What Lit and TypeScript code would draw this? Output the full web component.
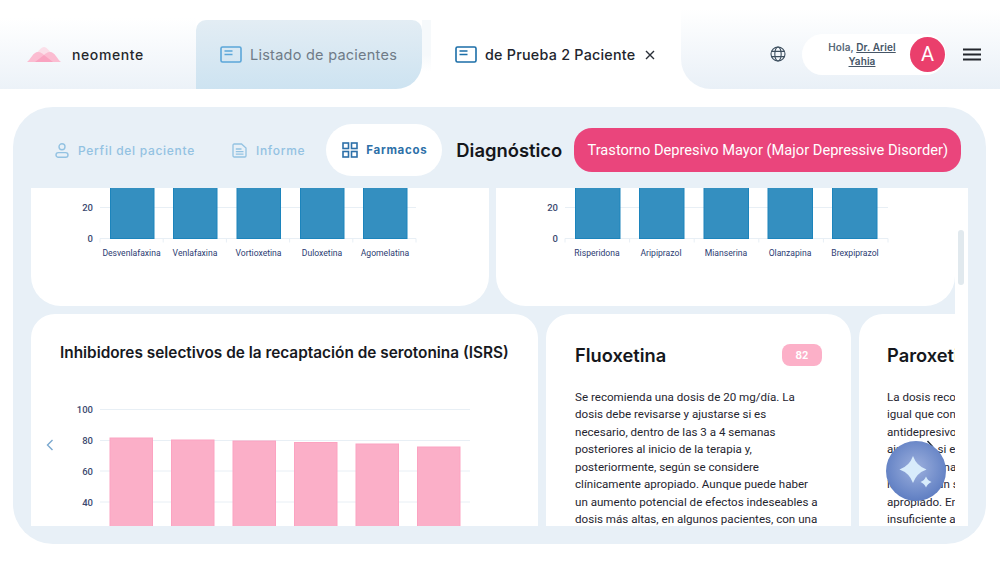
import { LitElement, css, html, svg } from 'lit';
import { customElement } from 'lit/decorators.js';

interface BarChart {
  width: number;
  height: number;
  gridLeft: number;
  gridRight: number;
  baseline: number | null;
  ticks: { label: string; y: number }[];
  barWidth: number;
  bars: { x: number; top: number; label?: string; labelX?: number }[];
  fill: string;
  stroke: string;
}

const blueLeft: BarChart = {
  width: 458,
  height: 118,
  gridLeft: 69,
  gridRight: 385,
  baseline: 50.5,
  ticks: [
    { label: '20', y: 19.5 },
    { label: '0', y: 50.5 },
  ],
  barWidth: 43.5,
  bars: [
    { x: 79.5, top: -5, label: 'Desvenlafaxina', labelX: 100.5 },
    { x: 142.5, top: -5, label: 'Venlafaxina', labelX: 164 },
    { x: 206, top: -5, label: 'Vortioxetina', labelX: 227.5 },
    { x: 269.5, top: -5, label: 'Duloxetina', labelX: 291 },
    { x: 332.5, top: -5, label: 'Agomelatina', labelX: 354 },
  ],
  fill: '#348fc0',
  stroke: '#1c84bc',
};

const blueRight: BarChart = {
  width: 459,
  height: 118,
  gridLeft: 69,
  gridRight: 392,
  baseline: 50.5,
  ticks: [
    { label: '20', y: 19.5 },
    { label: '0', y: 50.5 },
  ],
  barWidth: 44.5,
  bars: [
    { x: 79.5, top: -5, label: 'Risperidona', labelX: 101 },
    { x: 143.5, top: -5, label: 'Aripiprazol', labelX: 165 },
    { x: 208, top: -5, label: 'Mianserina', labelX: 230 },
    { x: 272, top: -5, label: 'Olanzapina', labelX: 294 },
    { x: 336.5, top: -5, label: 'Brexpiprazol', labelX: 359 },
  ],
  fill: '#348fc0',
  stroke: '#1c84bc',
};

const pinkChart: BarChart = {
  width: 507,
  height: 162,
  gridLeft: 69,
  gridRight: 439,
  baseline: null,
  ticks: [
    { label: '100', y: 45.5 },
    { label: '80', y: 76.5 },
    { label: '60', y: 107 },
    { label: '40', y: 138 },
  ],
  barWidth: 42.5,
  bars: [
    { x: 79, top: 74 },
    { x: 140.5, top: 76 },
    { x: 202, top: 77 },
    { x: 263.5, top: 78.5 },
    { x: 325, top: 80 },
    { x: 386.5, top: 83 },
  ],
  fill: '#fbafc8',
  stroke: '#fca3c1',
};

function renderChart(c: BarChart) {
  const slot = (c.gridRight - c.gridLeft) / c.bars.length;
  return html`<svg class="chart" width=${c.width} height=${c.height} viewBox="0 0 ${c.width} ${c.height}">
    ${c.ticks.map(
      t => svg`<line x1=${c.gridLeft} x2=${c.gridRight} y1=${t.y} y2=${t.y} stroke="#e8eff5" stroke-width="1" />
        <text class="tick" x=${c.gridLeft - 7} y=${t.y + 3.5} text-anchor="end">${t.label}</text>`,
    )}
    ${c.baseline !== null
      ? c.bars.map((_, i) => {
          const x = c.gridLeft + slot * i;
          return svg`<line x1=${x} x2=${x} y1=${c.baseline!} y2=${c.baseline! + 4} stroke="#e8eff5" />`;
        })
      : ''}
    ${c.baseline !== null
      ? svg`<line x1=${c.gridRight} x2=${c.gridRight} y1=${c.baseline} y2=${c.baseline + 4} stroke="#e8eff5" />`
      : ''}
    ${c.bars.map(
      b => svg`<rect x=${b.x} y=${b.top} width=${c.barWidth} height=${(c.baseline ?? c.height + 5) - b.top}
          fill=${c.fill} stroke=${c.stroke} stroke-width="1" />
        ${b.label
          ? svg`<text class="cat" x=${b.labelX} y=${(c.baseline ?? 0) + 17} text-anchor="middle">${b.label}</text>`
          : ''}`,
    )}
  </svg>`;
}

const cardIcon = (color: string) => html`<svg width="22" height="17" viewBox="0 0 22 17" fill="none" stroke=${color}>
  <rect x="1" y="1" width="20" height="15" rx="1.5" stroke-width="1.6" />
  <path d="M4.500 5H12.500M4.500 8.500H12.500" stroke-width="1.4" />
</svg>`;

@customElement('app-root')
export class AppRoot extends LitElement {
  static styles = css`
    :host {
      display: block;
      position: relative;
      width: 1000px;
      height: 561px;
      overflow: hidden;
      background: #fff;
      font-family: 'Inter', 'Liberation Sans', sans-serif;
      color: #222;
    }

    .top {
      display: flex;
      height: 89px;
    }
    .brand {
      width: 196px;
      display: flex;
      align-items: center;
      gap: 11px;
      padding: 19px 0 0 27px;
      box-sizing: border-box;
      background: linear-gradient(180deg, #fff 20%, #ecf2f8 100%);
      font-size: 14px;
      font-weight: 500;
      color: #26272b;
      letter-spacing: 0.6px;
    }
    .tab {
      margin-top: 20px;
      display: flex;
      align-items: center;
      gap: 8px;
      box-sizing: border-box;
      font-size: 14.5px;
      white-space: nowrap;
      letter-spacing: 0.25px;
    }
    .tab.idle {
      width: 226px;
      padding-left: 24px;
      border-radius: 10px 10px 26px 0;
      background: linear-gradient(180deg, #e3edf4 0%, #cde3f1 100%);
      color: #6f7b87;
    }
    .tab-gap {
      width: 9px;
      margin-top: 20px;
      background: linear-gradient(180deg, #f6f9fb 0%, #f6f9fb 50%, #fff 75%);
    }
    .tab.open {
      width: 250px;
      padding-left: 24px;
      border-radius: 10px 10px 0 0;
      background: #fff;
      color: #22252d;
      font-weight: 500;
      font-size: 14.3px;
    }
    .close {
      margin-left: 2px;
      display: block;
    }
    .right {
      flex: 1;
      display: flex;
      align-items: center;
      padding: 19px 0 0 89px;
      border-bottom-left-radius: 30px;
      background: linear-gradient(180deg, #fff 10%, #e9f0f7 100%);
    }
    .greet {
      width: 144px;
      height: 41px;
      margin-left: 16px;
      display: flex;
      align-items: center;
      box-sizing: border-box;
      padding-right: 1px;
      border-radius: 21px;
      background: #fff;
    }
    .greet p {
      flex: 1;
      margin: 0;
      padding-left: 12px;
      text-align: center;
      font-size: 10px;
      font-weight: 600;
      letter-spacing: 0.1px;
      line-height: 14.5px;
      color: #586878;
    }
    .greet u {
      color: #455566;
    }
    .avatar {
      width: 35px;
      height: 35px;
      flex: none;
      display: flex;
      align-items: center;
      justify-content: center;
      border-radius: 50%;
      background: #ea3f6c;
      color: #fff;
      font-family: 'Roboto', sans-serif;
      font-size: 20px;
    }
    .menu {
      margin-left: 17px;
      display: block;
    }

    .panel {
      height: 437px;
      margin: 18px 14px 0 13px;
      padding: 17px 18px 18px 18px;
      box-sizing: border-box;
      border-radius: 40px;
      background: #e8f0f7;
    }
    .nav {
      height: 52px;
      display: flex;
      align-items: center;
      margin-bottom: 12px;
      white-space: nowrap;
    }
    .nav-item {
      display: flex;
      align-items: center;
      gap: 9px;
      font-size: 12px;
      font-weight: 500;
      letter-spacing: 0.7px;
      color: #93c2e2;
    }
    .nav-item.profile {
      margin-left: 24px;
    }
    .nav-item.report {
      margin-left: 37px;
    }
    .nav-item.active {
      margin-left: 21px;
      height: 52px;
      width: 116px;
      box-sizing: border-box;
      padding-left: 16px;
      gap: 8px;
      border-radius: 26px;
      background: #fff;
      color: #2d70a8;
      font-weight: 700;
      font-size: 11.5px;
    }
    .dx-label {
      margin-left: 14px;
      font-size: 18.4px;
      font-weight: 600;
      color: #14161b;
    }
    .dx-value {
      margin-left: 12px;
      width: 387px;
      height: 44px;
      flex: none;
      display: flex;
      align-items: center;
      justify-content: center;
      border-radius: 18px;
      background: #ea457c;
      color: #fff;
      font-family: 'Roboto', sans-serif;
      font-size: 14.65px;
    }

    .content {
      display: flex;
      width: 937px;
      height: 338px;
    }
    .cards {
      position: relative;
      width: 924px;
      display: flex;
      flex-direction: column;
      gap: 8px;
      overflow: hidden;
    }
    .scroll-track {
      width: 13px;
      background: #fff;
    }
    .scroll-thumb {
      width: 6px;
      height: 55px;
      margin: 42px 0 0 3px;
      border-radius: 3px;
      background: #e1e9ee;
    }
    .row {
      display: flex;
      flex: none;
    }
    .row.upper {
      height: 118px;
      gap: 7px;
    }
    .row.lower {
      height: 212px;
      gap: 8px;
    }
    .card {
      flex: none;
      background: #fff;
      overflow: hidden;
    }
    .upper .card {
      border-radius: 0 0 30px 30px;
    }
    .lower .card {
      border-radius: 24px 24px 0 0;
    }
    .chart {
      display: block;
    }
    .tick {
      font-family: 'Roboto', sans-serif;
      font-size: 9.5px;
      font-weight: 500;
      fill: #3d4a70;
    }
    .cat {
      font-family: 'Roboto', sans-serif;
      font-size: 8.6px;
      fill: #2c3c72;
    }
    .chart-card {
      width: 507px;
    }
    .chart-card h2 {
      margin: 28px 0 0 29px;
      font-size: 15.36px;
      line-height: 22px;
      font-weight: 600;
      color: #17191e;
      white-space: nowrap;
    }
    .drug {
      width: 305px;
      box-sizing: border-box;
      padding: 30px 29px 0 29px;
    }
    .drug.next {
      padding-left: 28px;
    }
    .drug-head {
      display: flex;
      align-items: center;
      justify-content: space-between;
      height: 22px;
    }
    .drug-head h3 {
      margin: 0;
      font-size: 18.3px;
      font-weight: 600;
      color: #15171c;
    }
    .score {
      width: 40px;
      height: 22px;
      display: flex;
      align-items: center;
      justify-content: center;
      border-radius: 8px;
      background: #fcb0c8;
      color: #fff;
      font-size: 10px;
      font-weight: 700;
    }
    .drug p {
      margin: 23px 0 0;
      font-family: 'Roboto', sans-serif;
      font-size: 11.6px;
      line-height: 17.45px;
      color: #1f2530;
      white-space: nowrap;
    }
    .arrow {
      position: absolute;
      display: block;
    }
    .arrow.prev {
      left: 15px;
      top: 251px;
    }
    .arrow.next {
      left: 895px;
      top: 252px;
    }
    .fab {
      position: absolute;
      left: 886px;
      top: 441px;
      width: 60px;
      height: 60px;
      border-radius: 50%;
      background: radial-gradient(circle at 50% 45%, #9db0dd 0%, #6b88c8 60%, #4a6cb6 100%);
    }
    .fab svg {
      display: block;
    }
  `;

  render() {
    return html`
      <div class="top">
        <div class="brand">
          <svg width="34" height="15" viewBox="0 0 34 15">
            <path d="M8 7C12 4 14 0 17 0S22 4 26 7L17 13Z" fill="#fbdfe9" />
            <path d="M0 15C4 12 6 5 11 5C14 5 16 7 17 8C18 7 20 5 23 5C28 5 30 12 34 15Z" fill="#fbbcd1" />
            <path d="M8 15C11 13 14 10 17 8C20 10 23 13 26 15Z" fill="#f9a3c0" />
          </svg>
          <span>neomente</span>
        </div>
        <div class="tab idle">${cardIcon('#5ba6d9')}<span>Listado de pacientes</span></div>
        <div class="tab-gap"></div>
        <div class="tab open">
          ${cardIcon('#1b6ea8')}<span>de Prueba 2 Paciente</span>
          <svg class="close" width="10" height="10" viewBox="0 0 10 10" stroke="#2a2f38" stroke-width="1.4">
            <path d="M1 1L9 9M9 1L1 9" />
          </svg>
        </div>
        <div class="right">
          <svg width="16" height="16" viewBox="0 0 16 16" fill="none" stroke="#3c4e5e" stroke-width="1.1">
            <circle cx="8" cy="8" r="7" />
            <ellipse cx="8" cy="8" rx="3.2" ry="7" />
            <path d="M1.600 5.400H14.400M1.600 10.600H14.400" />
          </svg>
          <div class="greet">
            <p>Hola, <u>Dr. Ariel<br />Yahia</u></p>
            <div class="avatar">A</div>
          </div>
          <svg class="menu" width="18" height="13" viewBox="0 0 18 13" stroke="#23262c" stroke-width="2">
            <path d="M0 1.500H18M0 6.500H18M0 11.500H18" />
          </svg>
        </div>
      </div>

      <div class="panel">
        <div class="nav">
          <div class="nav-item profile">
            <svg width="14" height="15" viewBox="0 0 14 15" fill="none" stroke="#93c2e2" stroke-width="1.4">
              <circle cx="7" cy="3.800" r="3" />
              <rect x="1" y="9.600" width="12" height="4.600" rx="2.300" />
            </svg>
            <span>Perfil del paciente</span>
          </div>
          <div class="nav-item report">
            <svg width="15" height="15" viewBox="0 0 15 15" fill="none" stroke="#93c2e2" stroke-width="1.3">
              <path d="M1 2.200C1 1.500 1.500 1 2.200 1H9.500L14 5V12.800C14 13.500 13.500 14 12.800 14H2.200C1.500 14 1 13.500 1 12.800Z" />
              <path d="M3.800 6H9.500M3.800 8.600H11.500M3.800 11.200H11.500" />
            </svg>
            <span>Informe</span>
          </div>
          <div class="nav-item active">
            <svg width="16" height="16" viewBox="0 0 16 16" fill="none" stroke="#2d70a8" stroke-width="1.6">
              <rect x="1" y="1" width="5.500" height="5.500" />
              <rect x="9.500" y="1" width="5.500" height="5.500" />
              <rect x="1" y="9.500" width="5.500" height="5.500" />
              <rect x="9.500" y="9.500" width="5.500" height="5.500" />
            </svg>
            <span>Farmacos</span>
          </div>
          <div class="dx-label">Diagnóstico</div>
          <div class="dx-value">Trastorno Depresivo Mayor (Major Depressive Disorder)</div>
        </div>

        <div class="content">
          <div class="cards">
            <div class="row upper">
              <div class="card">${renderChart(blueLeft)}</div>
              <div class="card">${renderChart(blueRight)}</div>
            </div>
            <div class="row lower">
              <div class="card chart-card">
                <h2>Inhibidores selectivos de la recaptación de serotonina (ISRS)</h2>
                ${renderChart(pinkChart)}
              </div>
              <div class="card drug">
                <div class="drug-head"><h3>Fluoxetina</h3><span class="score">82</span></div>
                <p>
                  Se recomienda una dosis de 20 mg/día. La<br />
                  dosis debe revisarse y ajustarse si es<br />
                  necesario, dentro de las 3 a 4 semanas<br />
                  posteriores al inicio de la terapia y,<br />
                  posteriormente, según se considere<br />
                  clínicamente apropiado. Aunque puede haber<br />
                  un aumento potencial de efectos indeseables a<br />
                  dosis más altas, en algunos pacientes, con una
                </p>
              </div>
              <div class="card drug next">
                <div class="drug-head"><h3>Paroxetina</h3></div>
                <p>
                  La dosis recomendada es de 20 mg/día,<br />
                  igual que con otros fármacos<br />
                  antidepresivos. La dosis debe revisarse y<br />
                  ajustarse si es necesario, dentro de las<br />
                  3 a 4 semanas posteriores al inicio y<br />
                  luego según se considere clínicamente<br />
                  apropiado. En pacientes con respuesta<br />
                  insuficiente a la dosis de 20 mg/día
                </p>
              </div>
            </div>
            <svg class="arrow prev" width="8" height="12" viewBox="0 0 8 12" fill="none" stroke="#7aa8cf" stroke-width="1.4">
              <path d="M6.500 1L1.500 6L6.500 11" />
            </svg>
            <svg class="arrow next" width="8" height="13" viewBox="0 0 8 13" fill="none" stroke="#1c2530" stroke-width="1.4">
              <path d="M1.500 1L6.500 6.500L1.500 12" />
            </svg>
          </div>
          <div class="scroll-track"><div class="scroll-thumb"></div></div>
        </div>
      </div>

      <div class="fab">
        <svg width="60" height="60" viewBox="0 0 60 60" fill="#d8ecfb">
          <path d="M27 15Q30.500 25 40.500 28.500Q30.500 32 27 42Q23.500 32 13.500 28.500Q23.500 25 27 15Z" />
          <path d="M40 35.500Q41.500 39.500 45.500 41Q41.500 42.500 40 46.500Q38.500 42.500 34.500 41Q38.500 39.500 40 35.500Z" />
        </svg>
      </div>
    `;
  }
}
